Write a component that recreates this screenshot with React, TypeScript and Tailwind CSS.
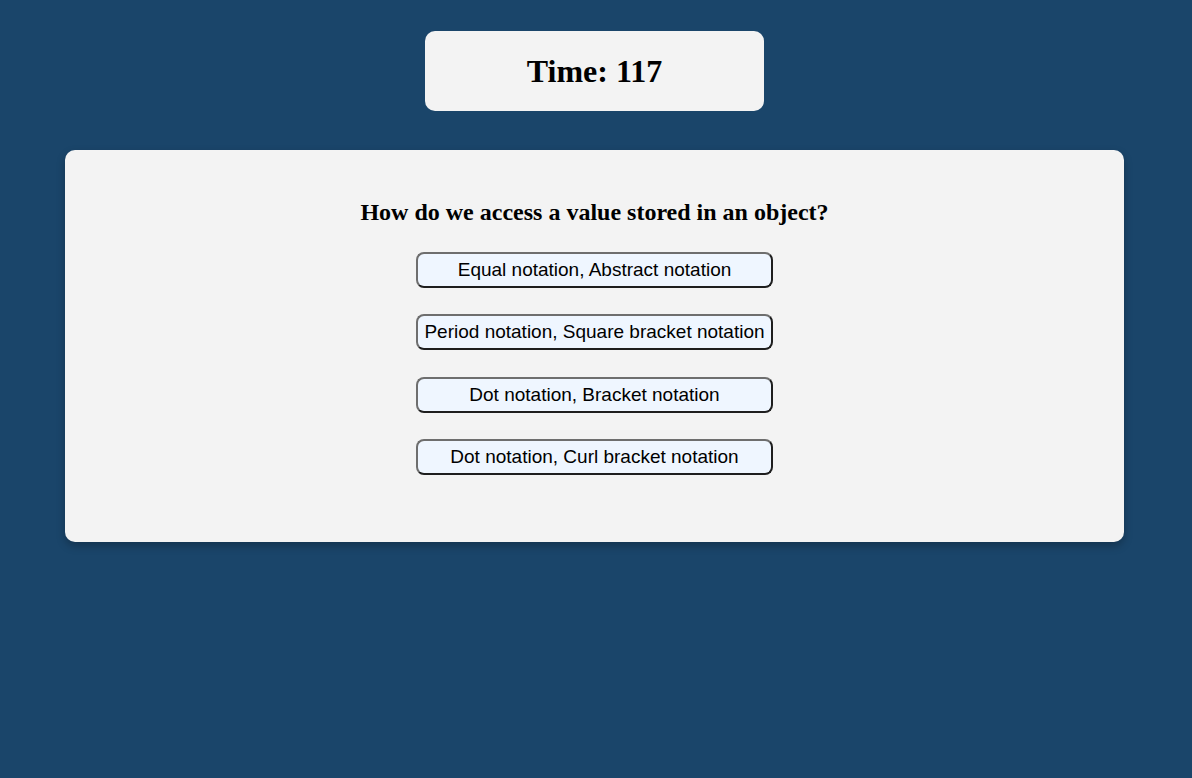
import React from 'react';

const answers = [
  'Equal notation, Abstract notation',
  'Period notation, Square bracket notation',
  'Dot notation, Bracket notation',
  'Dot notation, Curl bracket notation',
];

export default function App() {
  return (
    <main className="min-h-screen w-full bg-[#1a456a] flex flex-col items-center pt-[31px] pr-[3px]">
      {/* Timer */}
      <div className="w-[339px] h-[80px] bg-[#f3f3f3] rounded-[10px] flex items-center justify-center">
        <h1 className="text-[32px] font-bold text-black font-['Liberation_Serif',serif]">Time: 117</h1>
      </div>

      {/* Quiz card */}
      <section className="mt-[39px] w-[1059px] bg-[#f3f3f3] rounded-[10px] shadow-[0_4px_8px_rgba(0,0,0,0.25)] pt-[48px] pb-[67px] flex flex-col items-center">
        <h2 className="text-[24px] leading-[28px] font-bold text-black font-['Liberation_Serif',serif]">
          How do we access a value stored in an object?
        </h2>
        <div className="mt-[26px] flex flex-col items-center gap-[26.4px]">
          {answers.map((a) => (
            <button
              key={a}
              className="w-[357px] h-[36px] bg-[#eff6ff] border-2 border-t-[#6e6e6e] border-l-[#6e6e6e] border-b-[#1e1e1e] border-r-[#1e1e1e] rounded-[8px] text-[19px] text-black font-['Liberation_Sans',Arial,sans-serif] flex items-center justify-center whitespace-nowrap"
            >
              {a}
            </button>
          ))}
        </div>
      </section>
    </main>
  );
}
